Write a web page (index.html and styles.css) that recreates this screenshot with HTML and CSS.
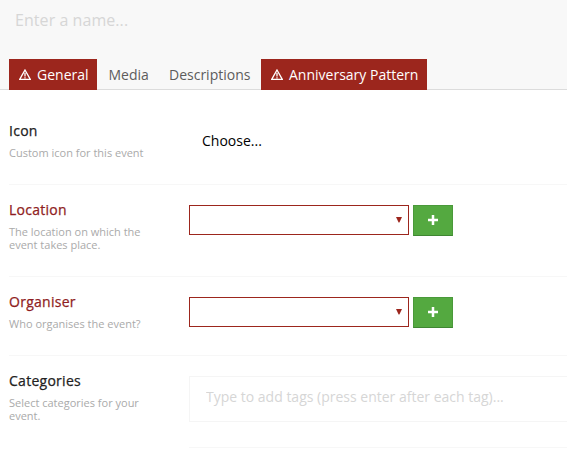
FILE: index.html
```html
<!DOCTYPE html>
<html lang="en">
<head>
<meta charset="utf-8">
<title>Event</title>
<link rel="stylesheet" href="styles.css">
</head>
<body>
<header class="head">
  <input class="name" type="text" placeholder="Enter a name...">
  <nav class="tabs">
    <a class="tab error first"><svg class="warn" viewBox="0 0 12 11"><path d="M6 1 11.3 10.4H.7Z"/><path d="M6 3.8V7.4M6 8.2V9.6"/></svg><span>General</span></a>
    <a class="tab media">Media</a>
    <a class="tab desc">Descriptions</a>
    <a class="tab error last"><svg class="warn" viewBox="0 0 12 11"><path d="M6 1 11.3 10.4H.7Z"/><path d="M6 3.8V7.4M6 8.2V9.6"/></svg><span>Anniversary Pattern</span></a>
  </nav>
</header>
<main class="form">
  <section class="row row-icon">
    <div class="info"><h2>Icon</h2><p>Custom icon for this event</p></div>
    <div class="field"><span class="choose">Choose...</span></div>
  </section>
  <section class="row row-location">
    <div class="info"><h2 class="invalid">Location</h2><p>The location on which the event takes place.</p></div>
    <div class="field"><div class="select"><svg class="arrow" viewBox="0 0 6 6"><path d="M0 0H6L3.4 5.6H2.6Z"/></svg></div><button class="add"><svg viewBox="0 0 10 10"><path d="M5 0V10M0 5H10"/></svg></button></div>
  </section>
  <section class="row row-organiser">
    <div class="info"><h2 class="invalid">Organiser</h2><p>Who organises the event?</p></div>
    <div class="field"><div class="select"><svg class="arrow" viewBox="0 0 6 6"><path d="M0 0H6L3.4 5.6H2.6Z"/></svg></div><button class="add"><svg viewBox="0 0 10 10"><path d="M5 0V10M0 5H10"/></svg></button></div>
  </section>
  <section class="row row-categories">
    <div class="info"><h2>Categories</h2><p>Select categories for your event.</p></div>
    <div class="field tags"><input class="tag-input" type="text" placeholder="Type to add tags (press enter after each tag)..."><div class="rule"></div></div>
  </section>
</main>
</body>
</html>
```

FILE: styles.css
```css
* { box-sizing: border-box; }
body {
  margin: 0;
  height: 468px;
  overflow: hidden;
  background: #fff;
  color: #222;
  font: 14px/20px "Open Sans", "Noto Sans", sans-serif;
}
.head {
  height: 90px;
  background: #f8f8f8;
  border-bottom: 1px solid #dcdcdc;
}
.name {
  display: block;
  width: 100%;
  height: 40px;
  margin-bottom: 19px;
  padding: 0 15px;
  border: 0;
  outline: 0;
  background: none;
  font: 16px/40px "Open Sans", sans-serif;
  letter-spacing: 0.06px;
}
input::placeholder { color: #d6d6d6; opacity: 1; }
.tabs { display: flex; padding-left: 9px; }
.tab {
  height: 31px;
  line-height: 32px;
  color: #5c5c5c;
  white-space: nowrap;
}
.error {
  display: flex;
  align-items: center;
  gap: 6px;
  padding-left: 10px;
  background: #9c261d;
  color: #fff;
}
.first { width: 88px; }
.media { width: 72px; padding-left: 11.5px; }
.desc { width: 92px; }
.last { width: 166px; }
.warn {
  width: 12px;
  height: 11px;
  fill: none;
  stroke: #fff;
  stroke-width: 1.3;
}
.row {
  display: flex;
  margin-left: 9px;
  padding-top: 15px;
  border-bottom: 1px solid #f7f7f7;
}
.row-icon { height: 95px; padding-top: 31px; }
.row-location { height: 92px; }
.row-organiser { height: 79px; }
.row-categories { border: 0; }
.info { width: 180px; padding-right: 30px; }
h2 {
  margin: 0 0 5px;
  font-size: 14px;
  line-height: 20px;
  font-weight: 500;
  letter-spacing: 0.27px;
  -webkit-text-stroke: 0.25px currentColor;
}
.invalid { color: #8f1d22; }
p { margin: 0; color: #aaa; font-size: 11px; line-height: 13px; }
.field { display: flex; flex: 1; align-items: flex-start; gap: 4px; padding-top: 5px; }
.choose { padding: 5px 0 0 13px; color: #000; }
.select {
  display: flex;
  align-items: center;
  justify-content: flex-end;
  width: 220px;
  height: 30px;
  padding-right: 6px;
  border: 1px solid #9c261d;
}
.arrow { width: 6px; height: 6px; fill: #9c261d; }
.add {
  display: flex;
  align-items: center;
  justify-content: center;
  width: 40px;
  height: 31px;
  padding: 0 0 1px;
  border: 1px solid #4a993a;
  border-bottom-color: #3f8632;
  background: #54a940;
}
.add svg { width: 10px; height: 10px; stroke: #fff; stroke-width: 2.5; }
.tags { display: block; }
.tag-input {
  display: block;
  width: calc(100% + 10px);
  height: 46px;
  margin-bottom: 25px;
  padding: 0 16px 6px;
  border: 1px solid #f5f5f5;
  outline: 0;
  font: 14px "Open Sans", sans-serif;
}
.rule { height: 1px; background: #f7f7f7; }
```
